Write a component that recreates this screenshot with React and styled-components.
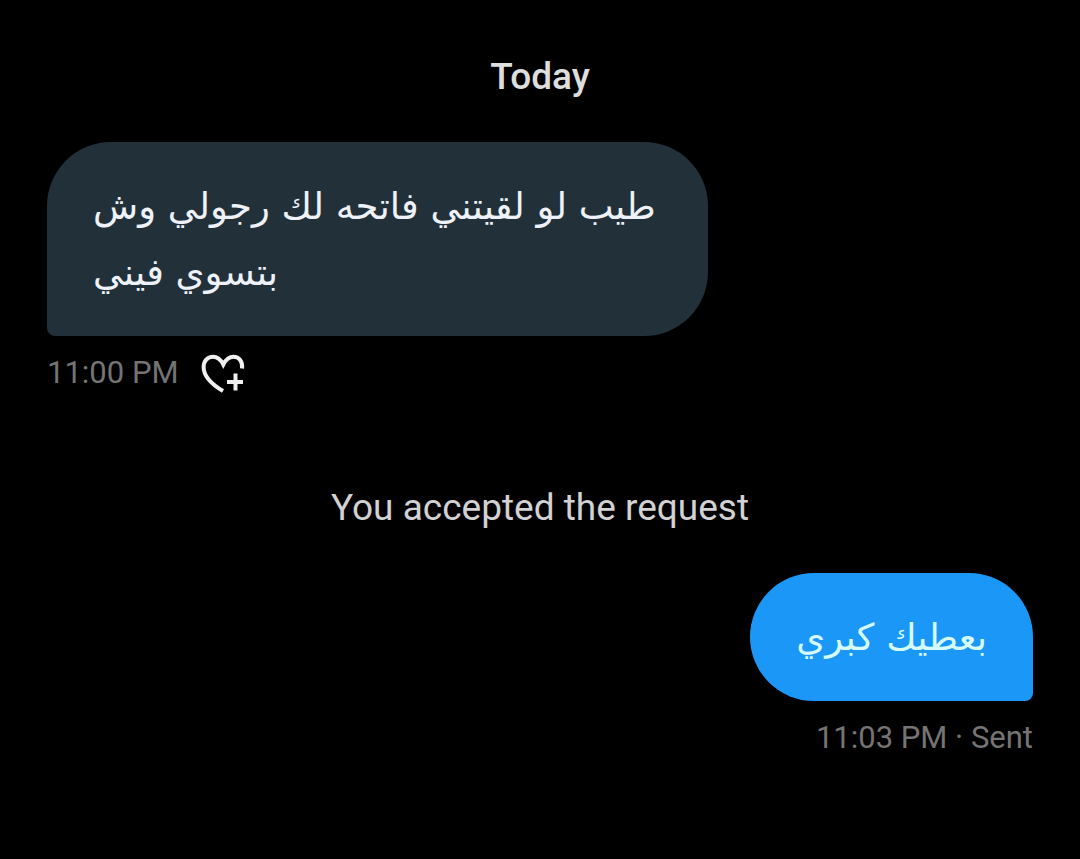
import React from "react";
import styled, { createGlobalStyle } from "styled-components";

const GlobalStyle = createGlobalStyle`
  * { box-sizing: border-box; }
  body {
    margin: 0;
    background: #000;
    font-family: Roboto, "DejaVu Sans", sans-serif;
  }
`;

const Conversation = styled.main`
  display: flex;
  flex-direction: column;
  min-height: 100vh;
  padding: 55px 47px;
  background: #000;
`;

const DayHeading = styled.h1`
  margin: 0;
  font-size: 37px;
  line-height: 44px;
  font-weight: 500;
  text-align: center;
  color: #dedede;
`;

const Message = styled.article`
  display: flex;
  flex-direction: column;
  align-items: ${(p) => (p.$sent ? "flex-end" : "flex-start")};
  margin-top: 43px;
`;

const Bubble = styled.p`
  max-width: 67%;
  margin: 0;
  padding: 32px 46px 30px;
  border-radius: ${(p) => (p.$sent ? "64px 64px 8px 64px" : "64px 64px 64px 8px")};
  background: ${(p) => (p.$sent ? "#1b98f7" : "#22303a")};
  color: ${(p) => (p.$sent ? "#d5fbff" : "#eef2f8")};
  font-family: "DejaVu Sans", sans-serif;
  font-size: 37px;
  line-height: 66px;
  text-align: left;
`;

const Meta = styled.footer`
  display: flex;
  align-items: center;
  gap: 22px;
  margin-top: 16px;
  font-size: 31px;
  line-height: 42px;
  color: #747474;
`;

const ReactButton = styled.button`
  display: flex;
  padding: 0;
  border: 0;
  background: none;
  color: #f0f0f0;
  cursor: pointer;
`;

const Notice = styled.p`
  margin: 92px 0 0;
  font-size: 37px;
  line-height: 44px;
  text-align: center;
  color: #d2d2d2;
`;

function HeartPlusIcon() {
  return (
    <svg width="44" height="40" viewBox="0 0 44 40" fill="none" stroke="currentColor" strokeWidth="4" aria-hidden="true">
      <path d="M41 15.500C42 8.500 38 3.700 32.500 3.700C28 3.700 24.800 6.500 22.300 11.500C19.800 6.500 16.500 3.700 12 3.700C6.500 3.700 2.600 8 2.600 14C2.600 23 11 31.500 22 38" />
      <path d="M26 29H42M34.500 20.500V37.500" />
    </svg>
  );
}

export default function App() {
  return (
    <>
      <GlobalStyle />
      <Conversation>
        <DayHeading>Today</DayHeading>
        <Message>
          <Bubble dir="rtl" lang="ar">طيب لو لقيتني فاتحه لك رجولي وش بتسوي فيني</Bubble>
          <Meta>
            <time>11:00 PM</time>
            <ReactButton type="button" aria-label="Add reaction">
              <HeartPlusIcon />
            </ReactButton>
          </Meta>
        </Message>
        <Notice>You accepted the request</Notice>
        <Message $sent>
          <Bubble $sent dir="rtl" lang="ar">بعطيك كبري</Bubble>
          <Meta>
            <span><time>11:03 PM</time> · Sent</span>
          </Meta>
        </Message>
      </Conversation>
    </>
  );
}
